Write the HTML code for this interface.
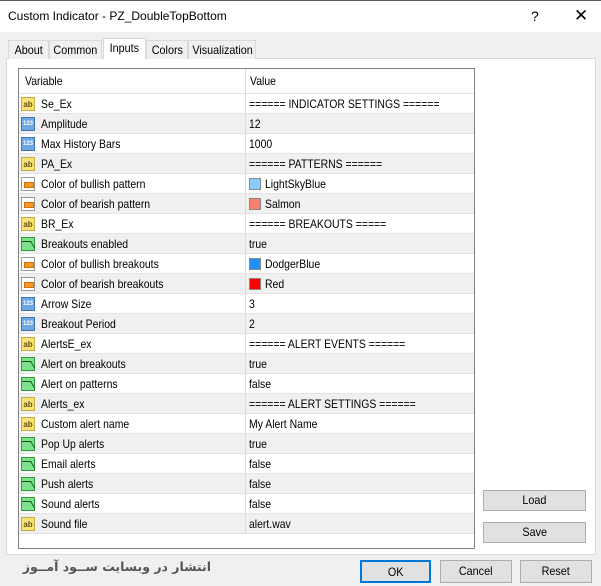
<!DOCTYPE html>
<html><head><meta charset="utf-8"><style>
*{margin:0;padding:0;box-sizing:border-box}
body{width:601px;height:586px;background:#f0f0f0;font-family:"Liberation Sans",sans-serif;font-size:11px;color:#000;position:relative;overflow:hidden}
.abs{position:absolute}
#title{left:0;top:0;width:601px;height:32px;background:#fff;border-top:1px solid #5a5a5a}
.tab{position:absolute;top:40px;height:19px;border:1px solid #d9d9d9;border-bottom:none;background:#f0f0f0;font-size:12px;line-height:18px;text-align:center;white-space:nowrap}
.tab span{display:inline-block;transform:scaleX(0.9)}
#panel{left:6px;top:58px;width:590px;height:497px;background:#fff;border:1px solid #d9d9d9}
#list{left:18px;top:68px;width:457px;height:481px;border:1px solid #828282;background:#fff;overflow:hidden}
.row{position:absolute;left:0;width:455px;height:20px;border-bottom:1px solid #e3e3e3;font-size:12px;line-height:20px;white-space:nowrap}
.row.g{background:#f0f0f0}
.row .n,.row .vt{position:absolute;transform:scaleX(0.87);transform-origin:0 50%}
.row .n{left:22px}
.row .v{position:absolute;left:226px;border-left:1px solid #dcdcdc;height:20px}
.row .vt{left:230px}
.ic{position:absolute;left:2px;top:3px;width:14px;height:14px;font-size:8px;line-height:13px;text-align:center;font-weight:bold}
.ab{background:#f6e27a;border:1px solid #c7a93c;color:#6a5310}
.nb{background:#6ea7e0;border:1px solid #3d74b5;color:#fff;font-size:6px}
.cl{background:#fff;border:1px solid #999}
.cl:after{content:"";position:absolute;left:2px;top:4px;width:8px;height:4px;background:#f29a2a;border:1px solid #d86b10}
.bl{background:#7ee08a;border:1px solid #2e9a3c}
.bl:after{content:"";position:absolute;left:2px;top:3px;width:8px;height:6px;border-top:1px solid #114d19;border-right:1px solid #114d19;transform:skewX(30deg)}
.sw{position:absolute;left:230px;top:4px;width:12px;height:12px}
.btn{position:absolute;background:#e1e1e1;border:1px solid #adadad;font-size:12px;text-align:center}
.btn span{display:inline-block;transform:scaleX(0.9)}
</style></head><body>
<div id="title" class="abs"><span class="abs" style="left:8px;top:8px;font-size:12px">Custom Indicator - PZ_DoubleTopBottom</span>
<span class="abs" style="left:531px;top:7px;font-size:14px">?</span>
<span class="abs" style="left:574px;top:5px;font-size:17px;font-weight:lighter">✕</span></div>
<div id="panel" class="abs"></div>
<div class="tab" style="left:8px;width:41px"><span>About</span></div>
<div class="tab" style="left:49px;width:53px"><span>Common</span></div>
<div class="tab" style="left:103px;width:43px;top:38px;height:21px;background:#fff"><span>Inputs</span></div>
<div class="tab" style="left:146px;width:42px"><span>Colors</span></div>
<div class="tab" style="left:188px;width:68px"><span>Visualization</span></div>
<div id="list" class="abs">
<div class="row" style="top:0;height:25px;line-height:25px"><span class="n" style="left:6px">Variable</span><span class="v" style="height:25px"></span><span class="vt" style="left:231px;line-height:25px">Value</span></div>
</div>
<div class="btn" style="left:483px;top:490px;width:103px;height:21px;line-height:19px"><span>Load</span></div>
<div class="btn" style="left:483px;top:522px;width:103px;height:21px;line-height:19px"><span>Save</span></div>
<div class="btn" style="left:360px;top:560px;width:71px;height:23px;line-height:20px;border:2px solid #0078d7"><span>OK</span></div>
<div class="btn" style="left:440px;top:560px;width:72px;height:23px;line-height:21px"><span>Cancel</span></div>
<div class="btn" style="left:520px;top:560px;width:72px;height:23px;line-height:21px"><span>Reset</span></div>
<div class="abs" style="left:15px;top:559px;width:196px;font-family:'DejaVu Sans',sans-serif;font-weight:bold;font-size:12.5px;color:#555;direction:rtl;text-align:right;white-space:nowrap">انتشار در وبسایت ســود آمــوز</div>
<script>
var R=[["ab","Se_Ex","====== INDICATOR SETTINGS ======"],["nb","Amplitude","12"],["nb","Max History Bars","1000"],["ab","PA_Ex","====== PATTERNS ======"],["cl","Color of bullish pattern","LightSkyBlue","#87cefa"],["cl","Color of bearish pattern","Salmon","#fa8072"],["ab","BR_Ex","====== BREAKOUTS ====="],["bl","Breakouts enabled","true"],["cl","Color of bullish breakouts","DodgerBlue","#1e90ff"],["cl","Color of bearish breakouts","Red","#ff0000"],["nb","Arrow Size","3"],["nb","Breakout Period","2"],["ab","AlertsE_ex","====== ALERT EVENTS ======"],["bl","Alert on breakouts","true"],["bl","Alert on patterns","false"],["ab","Alerts_ex","====== ALERT SETTINGS ======"],["ab","Custom alert name","My Alert Name"],["bl","Pop Up alerts","true"],["bl","Email alerts","false"],["bl","Push alerts","false"],["bl","Sound alerts","false"],["ab","Sound file","alert.wav"]];
var L=document.getElementById("list"),h="";
R.forEach(function(r,i){var t={ab:"ab",nb:"123",cl:"",bl:""}[r[0]];
h+='<div class="row'+(i%2?' g':'')+'" style="top:'+(25+20*i)+'px"><span class="ic '+r[0]+'">'+t+'</span><span class="n">'+r[1]+'</span><span class="v"></span>'+(r[3]?'<span class="sw" style="background:'+r[3]+';border:1px solid #888"></span><span class="vt" style="left:246px">'+r[2]+'</span>':'<span class="vt">'+r[2]+'</span>')+'</div>';});
L.innerHTML+=h;
</script>
</body></html>
